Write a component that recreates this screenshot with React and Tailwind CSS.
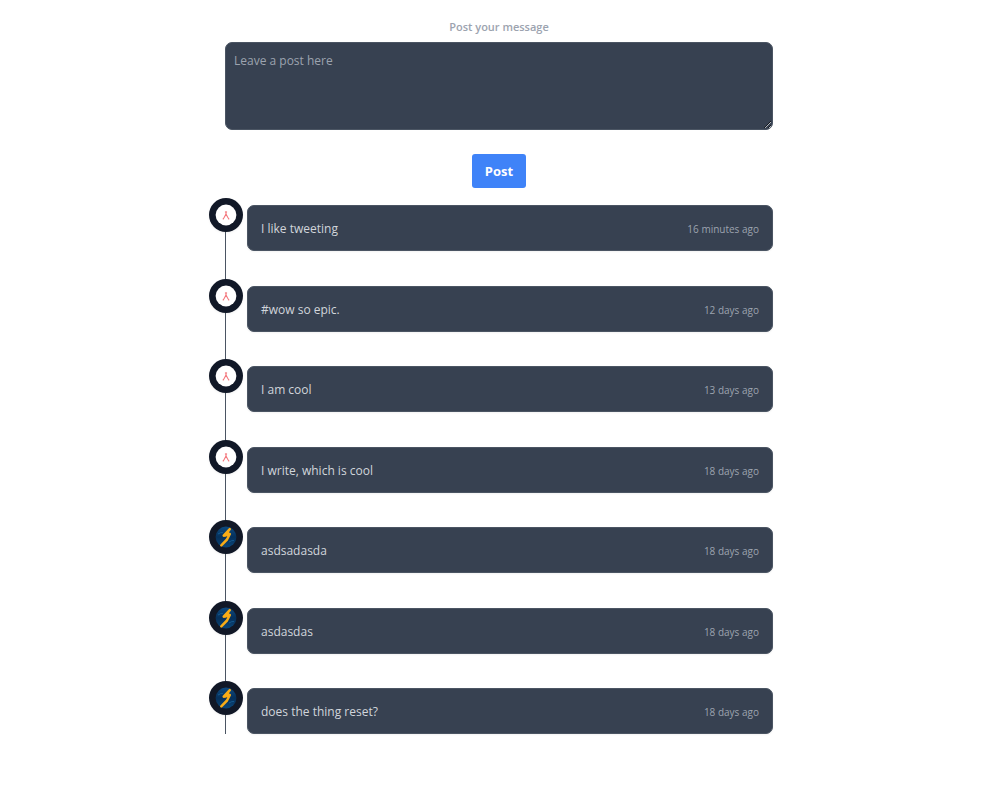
const posts = [
  { text: "I like tweeting", time: "16 minutes ago", avatar: "lambda" },
  { text: "#wow so epic.", time: "12 days ago", avatar: "lambda" },
  { text: "I am cool", time: "13 days ago", avatar: "lambda" },
  { text: "I write, which is cool", time: "18 days ago", avatar: "lambda" },
  { text: "asdsadasda", time: "18 days ago", avatar: "bolt" },
  { text: "asdasdas", time: "18 days ago", avatar: "bolt" },
  { text: "does the thing reset?", time: "18 days ago", avatar: "bolt" },
];

function LambdaAvatar() {
  return (
    <svg viewBox="0 0 22 22" className="size-[22px]" aria-hidden="true">
      <circle cx="11" cy="11" r="10.400" fill="#fff" />
      <g fill="none" stroke="#f4777d" strokeWidth="1.100">
        <path d="M11 10L9.300 13.200L7.900 15.400M11 10l1.700 3.200l1.400 2.200" />
        <path d="M9.900 8h2.200M11 7.300v3" />
      </g>
    </svg>
  );
}

function BoltAvatar() {
  return (
    <svg viewBox="0 0 22 22" className="size-[22px]" aria-hidden="true">
      <defs>
        <linearGradient id="sky" x1="0" y1="0" x2="0" y2="1">
          <stop offset="0" stopColor="#0d4a80" />
          <stop offset=".5" stopColor="#06305a" />
          <stop offset="1" stopColor="#0a4679" />
        </linearGradient>
      </defs>
      <circle cx="11" cy="11" r="10.400" fill="url(#sky)" />
      <path d="M3 8q3-2 5-1.500M14 16q3-2 5-1.500" stroke="#14598f" strokeWidth="1" fill="none" />
      <path
        d="M14.800 3.200L8.700 9.700L14.800 8L12 13.500L6.300 19.300"
        fill="none"
        stroke="#f9ac16"
        strokeWidth="2.500"
        strokeLinecap="round"
        strokeLinejoin="round"
      />
      <path d="M14.500 3.500L10 11L14 8.500z" fill="#f9ac16" />
    </svg>
  );
}

function Post({ text, time, avatar }) {
  return (
    <li className="relative mb-[34px] ml-[21px] last:mb-0 odd:mb-[35px] odd:last:mb-0">
      <span className="absolute -top-[7px] -left-[38px] flex size-[34px] items-center justify-center rounded-full bg-[#111827] shadow-sm shadow-black/5">
        {avatar === "bolt" ? <BoltAvatar /> : <LambdaAvatar />}
      </span>
      <article className="flex items-center justify-between rounded-[7px] border border-[#4b5563] bg-[#374151] px-[13px] pt-[13px] pb-[11px] shadow-xs">
        <p className="text-[12px] leading-5 text-[#d1d5db]">{text}</p>
        <time className="text-[10px] leading-5 text-[#9ca3af]">{time}</time>
      </article>
    </li>
  );
}

export default function App() {
  return (
    <main className="min-h-screen bg-white pr-[2px] font-['Open_Sans','Noto_Sans',sans-serif]">
      <div className="mx-auto max-w-[548px]">
        <form className="flex flex-col items-center pt-[18px]" onSubmit={(e) => e.preventDefault()}>
          <label htmlFor="message" className="mb-[7px] text-[11px] leading-[17px] font-semibold text-[#9ca3af]">
            Post your message
          </label>
          <textarea
            id="message"
            placeholder="Leave a post here"
            className="block h-[88px] w-full rounded-[7px] border border-[#4b5563] bg-[#374151] px-2 py-[9px] text-[12px] leading-[17px] text-white placeholder:text-[#9ca3af]"
          />
          <button type="submit" className="mt-6 rounded-[3px] bg-[#3f83f8] px-[13px] py-[7px] text-[13px] leading-5 font-bold text-white">
            Post
          </button>
        </form>
        <ol className="mt-[17px] border-l border-[#4b5563]">
          {posts.map((post, i) => (
            <Post key={i} {...post} />
          ))}
        </ol>
      </div>
    </main>
  );
}
